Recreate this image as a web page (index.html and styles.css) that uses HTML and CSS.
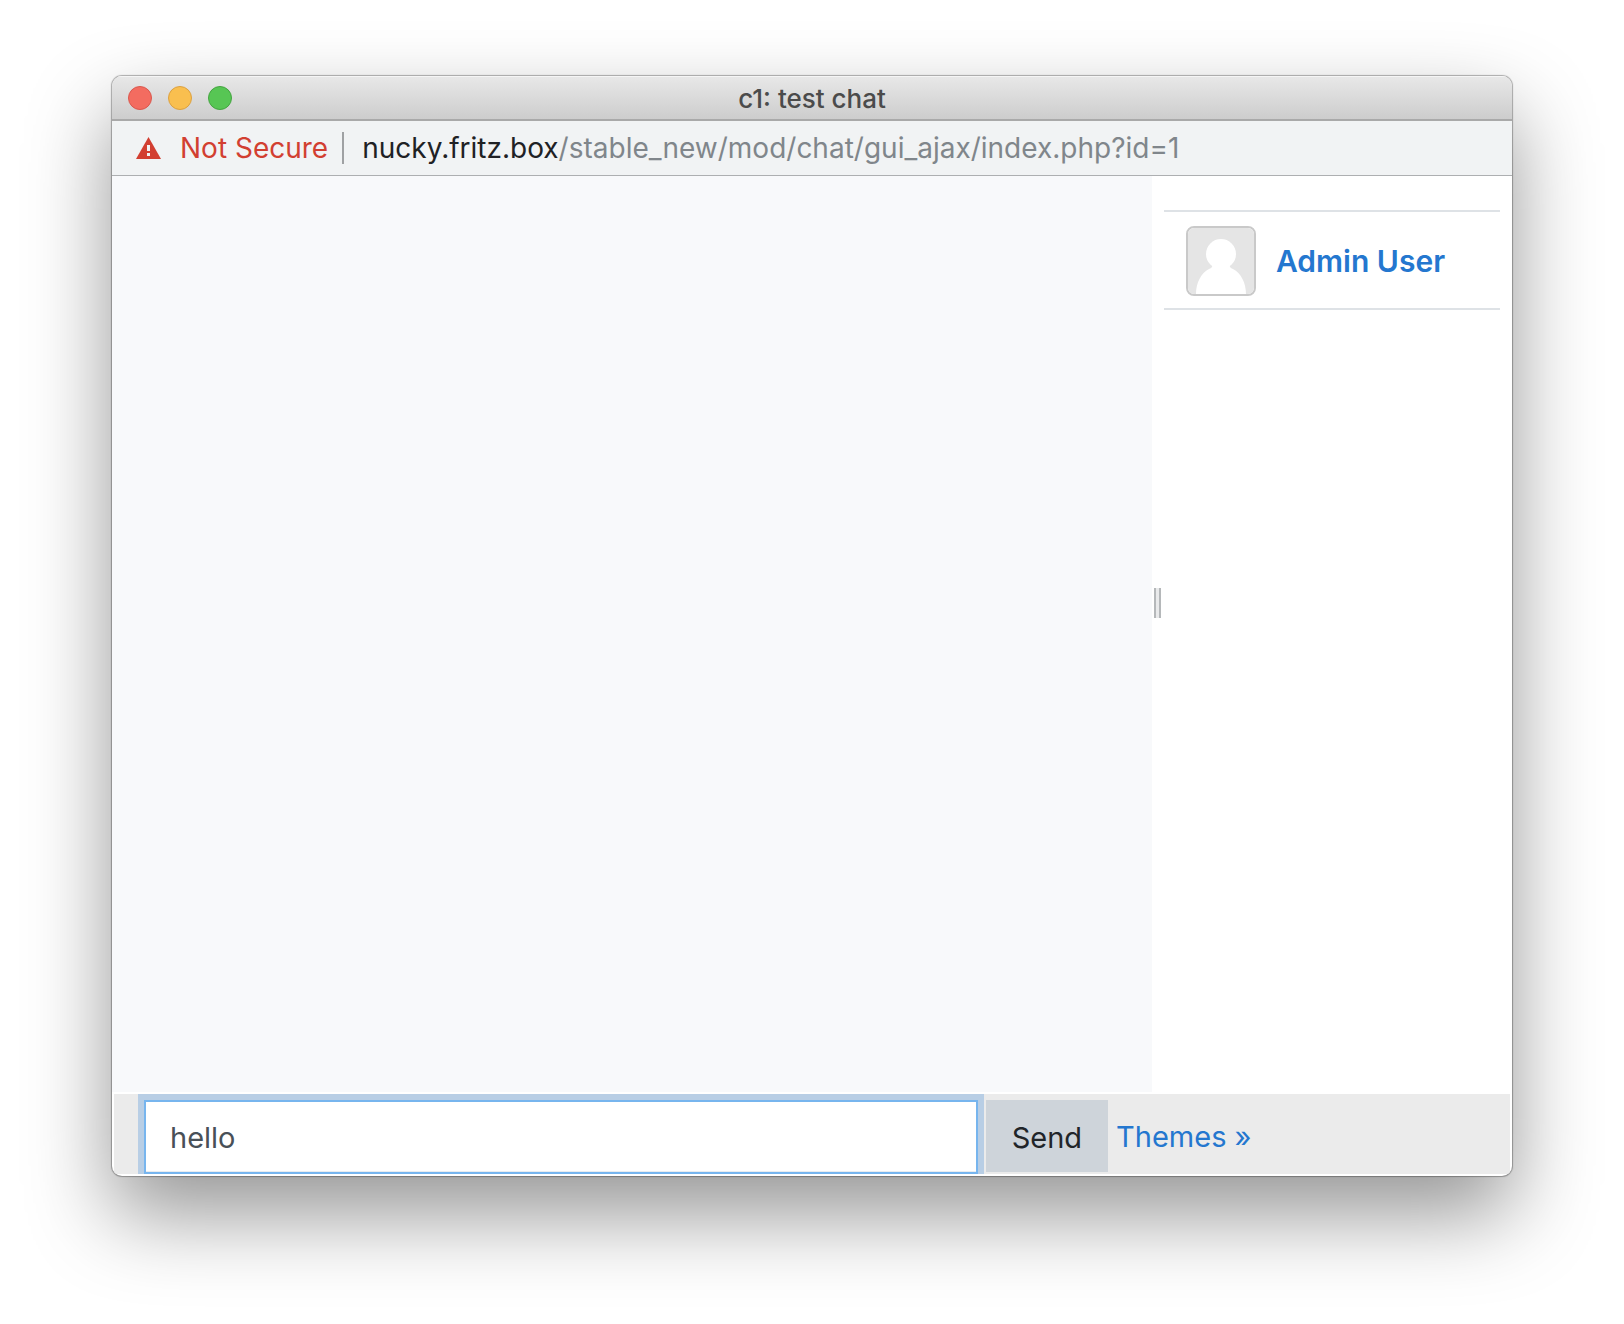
FILE: index.html
```
<!DOCTYPE html>
<html lang="en">
<head>
	<meta charset="UTF-8">
	<meta name="viewport" content="width=device-width, initial-scale=1">
	<title>c1: test chat</title>
	<link rel="stylesheet" href="styles.css">
</head>
<body>

<div class="window">
	<header class="titlebar">
		<div class="lights">
			<button class="light close" type="button" aria-label="Close"></button>
			<button class="light minimize" type="button" aria-label="Minimize"></button>
			<button class="light maximize" type="button" aria-label="Zoom"></button>
		</div>
		<h1 class="title">c1: test chat</h1>
	</header>

	<div class="addressbar">
		<svg class="warning" width="26" height="22" viewBox="0 0 26 22" aria-hidden="true">
			<path d="M12.5 0 L25 22 H0 Z" fill="#d23f31"/>
			<path d="M11 8 h3 v6 h-3 z M11 16 h3 v3 h-3 z" fill="#f1f3f4"/>
		</svg>
		<span class="insecure">Not Secure</span>
		<span class="url"><span class="host">nucky.fritz.box</span>/stable_new/mod/chat/gui_ajax/index.php?id=1</span>
	</div>

	<main class="chat">
		<section class="messages" aria-label="Messages"></section>
		<div class="resizer"><span class="grip"></span></div>
		<aside class="users">
			<div class="user">
				<svg class="avatar" width="66" height="66" viewBox="0 0 66 66" aria-hidden="true">
					<rect width="66" height="66" fill="#e5e5e5"/>
					<circle cx="33" cy="26" r="15" fill="#fff"/>
					<path d="M25 37 H41 Q42 40 45 41 C53 45 58 55 58 66 H8 C8 55 13 45 21 41 Q24 40 25 37 Z" fill="#fff"/>
				</svg>
				<a class="username" href="#">Admin User</a>
			</div>
		</aside>
	</main>

	<form class="inputbar">
		<input class="message" type="text" value="hello" aria-label="Message">
		<button class="send" type="button">Send</button>
		<a class="themes" href="#">Themes »</a>
	</form>
</div>

</body>
</html>
```

FILE: styles.css
```
* {
	box-sizing: border-box;
}

body {
	display: flex;
	height: 100vh;
	margin: 0;
	padding: 76px 112px 148px;
	background: #fff;
	color: #212529;
	font-family: Inter, Roboto, sans-serif;
	font-size: 28px;
}

a {
	color: #2477cf;
	text-decoration: none;
}

.window {
	display: flex;
	flex: 1;
	flex-direction: column;
	overflow: hidden;
	border-radius: 10px;
	background: #fff;
	box-shadow: 0 0 1px 1px rgba(0, 0, 0, .3), 0 38px 84px rgba(0, 0, 0, .42);
}

.titlebar {
	display: grid;
	grid-template-columns: 1fr auto 1fr;
	align-items: center;
	height: 45px;
	padding: 0 16px;
	border-bottom: 2px solid #a9a9a9;
	background: linear-gradient(#e8e8e8, #cdcdcd);
	box-shadow: inset 0 1px #f5f5f5;
}

.lights {
	display: flex;
	gap: 16px;
}

.light {
	width: 24px;
	height: 24px;
	padding: 0;
	border: 1px solid;
	border-radius: 50%;
}

.close {
	border-color: #d9584e;
	background: #f36c60;
}

.minimize {
	border-color: #dba041;
	background: #f9bf4f;
}

.maximize {
	border-color: #45a441;
	background: #57c654;
}

.title {
	margin: 0;
	padding-top: 2px;
	color: #4b4b4b;
	font-size: 26px;
	font-weight: 500;
}

.addressbar {
	display: flex;
	align-items: center;
	height: 55px;
	padding: 0 24px;
	border-bottom: 1px solid #adafb1;
	background: #f1f3f4;
	white-space: nowrap;
}

.insecure {
	margin-left: 18px;
	padding-right: 14px;
	border-right: 2px solid #9fa1a3;
	color: #d23f31;
	line-height: 32px;
}

.url {
	margin-left: 18px;
	color: #80868b;
}

.host {
	color: #202124;
}

.chat {
	display: flex;
	flex: 1;
	min-height: 0;
}

.messages {
	flex: 1;
	background: #f8f9fb;
}

.resizer {
	display: flex;
	align-items: center;
	width: 12px;
	padding: 0 2px;
}

.grip {
	width: 7px;
	height: 30px;
	margin-top: -62px;
	border: solid #b5b8ba;
	border-width: 0 2px;
	background: #e9eaeb;
}

.users {
	width: 348px;
	padding: 34px 12px 0 0;
}

.user {
	display: flex;
	align-items: center;
	gap: 20px;
	height: 100px;
	padding: 2px 22px 0;
	border: solid #dee2e6;
	border-width: 2px 0;
}

.avatar {
	width: 70px;
	height: 70px;
	border: 2px solid #c9c9c9;
	border-radius: 8px;
}

.username {
	font-size: 30px;
	font-weight: 600;
}

.inputbar {
	display: flex;
	align-items: flex-start;
	gap: 8px;
	height: 80px;
	margin: 2px;
	padding: 6px 30px;
	overflow: hidden;
	background: #ebebeb;
	font-size: 29px;
}

.message,
.send {
	font: inherit;
}

.message {
	width: 62.4%;
	height: 74px;
	padding: 0 24px;
	border: 2px solid #77b5ee;
	border-radius: 0;
	outline: 0;
	background: #fff;
	box-shadow: 0 0 0 6px #b8cee5, inset 0 -1px #e9ecef;
	color: #495057;
}

.send {
	height: 72px;
	padding: 2px 26px 0;
	border: 0;
	background: #ced4da;
	color: #212529;
}

.themes {
	line-height: 74px;
}
```
